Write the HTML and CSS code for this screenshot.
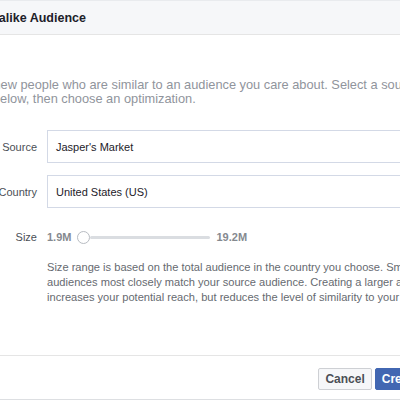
FILE: index.html
```html
<!DOCTYPE html>
<html lang="en">
<head>
    <meta charset="UTF-8">
    <meta name="viewport" content="width=device-width, initial-scale=1.0">
    <title>Lookalike Audience</title>
    <link rel="stylesheet" href="styles.css">
</head>
<body>
    <div class="dialog">
        <div class="dialog-header">
            <h1>Lookalike Audience</h1>
        </div>

        <div class="dialog-body">
            <p class="intro">Find new people who are similar to an audience you care about. Select a source<br>below, then choose an optimization.</p>

            <div class="row">
                <label>Source</label>
                <div class="field">Jasper's Market</div>
            </div>
            <div class="row">
                <label>Country</label>
                <div class="field">United States (US)</div>
            </div>
            <div class="row size-row">
                <label>Size</label>
                <div class="size">
                    <span class="size-value">1.9M</span>
                    <div class="slider">
                        <span class="thumb"></span>
                        <span class="track"></span>
                    </div>
                    <span class="size-value">19.2M</span>
                </div>
            </div>
            <p class="help">Size range is based on the total audience in the country you choose. Smaller<br>audiences most closely match your source audience. Creating a larger audience<br>increases your potential reach, but reduces the level of similarity to your source audience.</p>
        </div>

        <div class="dialog-footer">
            <button class="btn">Cancel</button>
            <button class="btn btn-primary">Create Audience</button>
        </div>
    </div>
</body>
</html>
```

FILE: styles.css
```css
body {
    font-family: "Liberation Sans", Arial, sans-serif;
    margin: 0;
    padding: 0;
    background-color: #fff;
    overflow: hidden;
}
.dialog {
    width: 538px;
    margin-left: -43px;
    background-color: #fff;
    border-bottom: 1px solid #dddfe2;
}
.dialog-header {
    height: 35px;
    display: flex;
    align-items: center;
    padding: 0 12px;
    background-color: #f6f7f9;
    border-top: 1px solid #e9ebee;
    border-bottom: 1px solid #e5e5e5;
    box-sizing: border-box;
}
.dialog-header h1 {
    margin: 0;
    font-size: 12.5px;
    font-weight: bold;
    color: #1d2129;
}
.dialog-body {
    padding: 43px 0 50px 0;
}
.intro {
    margin: 0 0 24px 36px;
    font-size: 12.8px;
    line-height: 14px;
    color: #90949c;
    white-space: nowrap;
    text-indent: -28px;
}
.row {
    display: flex;
    align-items: center;
    gap: 10px;
    margin-bottom: 12px;
}
.row label {
    width: 80px;
    text-align: right;
    font-size: 11px;
    color: #4b4f56;
}
.field {
    flex: 1;
    height: 33px;
    box-sizing: border-box;
    border: 1px solid #d3d9e6;
    padding: 0 8px;
    display: flex;
    align-items: center;
    font-size: 11px;
    color: #1d2129;
}
.size-row {
    height: 34px;
    margin-bottom: 6px;
}
.size {
    display: flex;
    align-items: center;
    gap: 6px;
}
.size-value {
    font-size: 11px;
    font-weight: bold;
    color: #85898f;
}
.slider {
    display: flex;
    align-items: center;
    width: 133px;
}
.thumb {
    width: 11px;
    height: 11px;
    border: 1px solid #b8bcc2;
    border-radius: 50%;
    background-color: #fff;
    flex: none;
}
.track {
    flex: 1;
    height: 3px;
    border-radius: 2px;
    background-color: #dadde1;
}
.help {
    margin: 0 0 0 90px;
    font-size: 11.1px;
    line-height: 15px;
    color: #666a70;
    white-space: nowrap;
}
.dialog-footer {
    display: flex;
    justify-content: flex-end;
    gap: 3px;
    padding: 12px 12px 9px;
    border-top: 1px solid #e5e5e5;
}
.btn {
    height: 22px;
    padding: 0 6px;
    font-family: "Liberation Sans", Arial, sans-serif;
    font-size: 12px;
    font-weight: bold;
    color: #4b4f56;
    background-color: #f6f7f9;
    border: 1px solid #ced0d4;
    border-radius: 2px;
}
.btn-primary {
    color: #fff;
    background-color: #4267b2;
    border-color: #4267b2;
}
```
